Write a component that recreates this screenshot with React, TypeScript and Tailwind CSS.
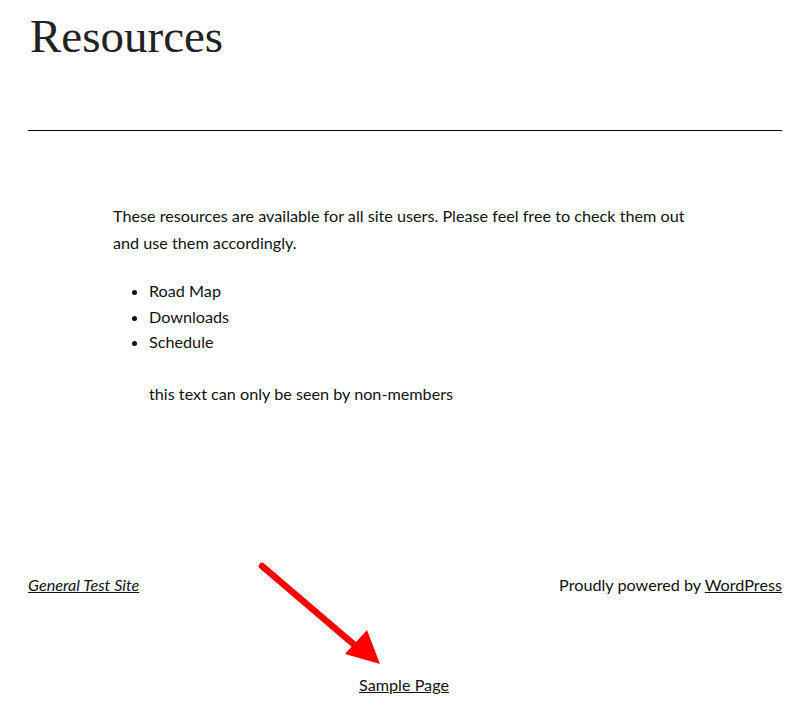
import React from "react";

export default function App() {
  return (
    <div className="relative min-h-[705px] w-[808px] bg-white text-[#111]">
      <div className="px-[28px] pr-[26px]">
        <h1 className="pt-[9px] pl-[2px] text-[47px] leading-[54px] font-light text-[#222] font-['Liberation_Serif',serif]">
          Resources
        </h1>
        <hr className="mt-[67px] border-0 border-t border-black" />
      </div>
      <div className="mx-auto mt-[71px] w-[582px] font-['Lato',sans-serif] text-[16.2px] text-[#111]">
        <p className="leading-[27px]">
          These resources are available for all site users. Please feel free to check them out and use them accordingly.
        </p>
        <ul className="mt-[22px] list-disc pl-[36px] leading-[25.5px]">
          <li>Road Map</li>
          <li>Downloads</li>
          <li>Schedule</li>
        </ul>
        <p className="mt-[26px] pl-[36px] leading-[26px]">this text can only be seen by non-members</p>
      </div>
      <div className="mt-[166px] flex items-center justify-between px-[28px] pr-[26px] font-['Lato',sans-serif] text-[16.2px]">
        <a className="italic underline">General Test Site</a>
        <span>
          Proudly powered by <a className="underline">WordPress</a>
        </span>
      </div>
      <div className="mt-[76px] flex justify-center font-['Lato',sans-serif] text-[16.2px]">
        <a className="underline">Sample Page</a>
      </div>
      <svg className="absolute left-0 top-0" width="808" height="705" viewBox="0 0 808 705">
        <line x1="262" y1="566" x2="358" y2="648" stroke="#ff0000" strokeWidth="6.5" strokeLinecap="round" />
        <polygon points="380,664 345,654 367,630" fill="#ff0000" />
      </svg>
    </div>
  );
}
